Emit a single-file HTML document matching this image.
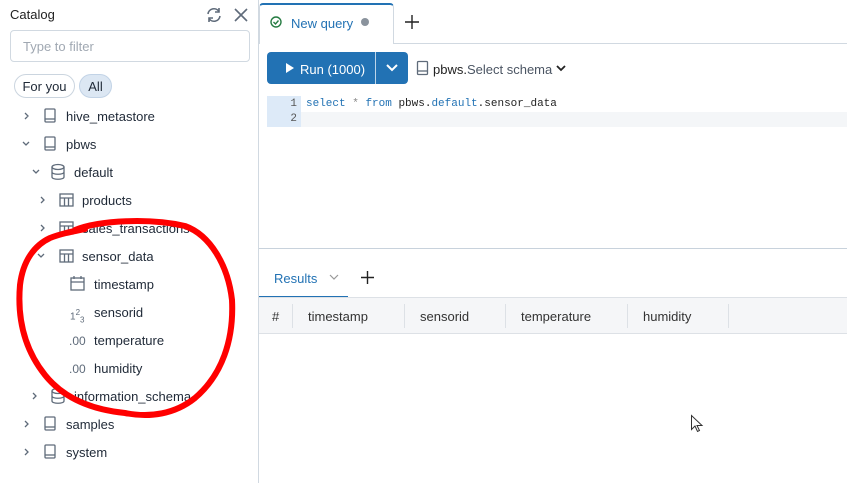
<!DOCTYPE html>
<html><head><style>
*{box-sizing:border-box;margin:0;padding:0}
body{width:847px;height:483px;overflow:hidden;background:#fff;font-family:"Liberation Sans",sans-serif;font-size:13px;color:#1f2937;position:relative}
.a{position:absolute}
.row{position:absolute;left:0;height:28px;line-height:30px;white-space:nowrap}
.th{position:absolute;top:298px;height:35px;line-height:38px;font-size:13px;color:#333}
.sep{position:absolute;top:304px;width:1px;height:24px;background:#dde1e6}
</style></head><body>
<!-- sidebar -->
<div class="a" style="left:258px;top:0;width:1px;height:483px;background:#d1d9e1"></div>
<div class="a" style="left:10px;top:7px;font-size:13px;color:#222">Catalog</div>
<svg class="a" style="left:205px;top:6px" width="18" height="18" viewBox="0 0 18 18" fill="none" stroke="#5f6b7a" stroke-width="1.6"><path d="M3 8a6 6 0 0 1 11-2.5M15 10a6 6 0 0 1-11 2.5M14 2v4h-4M4 16v-4h4"/></svg>
<svg class="a" style="left:233px;top:7px" width="16" height="16" viewBox="0 0 16 16" stroke="#5f6b7a" stroke-width="1.6"><path d="M2 2l12 12M14 2L2 14"/></svg>
<div class="a" style="left:10px;top:30px;width:240px;height:32px;border:1px solid #d1d9e1;border-radius:4px;padding-left:12px;line-height:31px;color:#a0a8b2">Type to filter</div>
<div class="a" style="left:14px;top:74px;width:61px;height:24px;border:1px solid #cbd5df;border-radius:12px;text-align:center;line-height:23px">For you</div>
<div class="a" style="left:79px;top:74px;width:33px;height:24px;border:1px solid #c2d3e6;background:#dce7f3;border-radius:12px;text-align:center;line-height:23px">All</div>

<svg class="a" style="left:0;top:0" width="258" height="483" fill="none" stroke="#5f6b7a" stroke-width="1.3">
<path d="M25 113l3 3-3 3M23 142l3 3 3-3M33 170l3 3 3-3M41 197l3 3-3 3M41 225l3 3-3 3M38 254l3 3 3-3M33 393l3 3-3 3M25 421l3 3-3 3M25 449l3 3-3 3"/>
<g><rect x="45" y="109" width="10" height="13" rx="1"/><path d="M45 119h10"/></g>
<g><rect x="45" y="137" width="10" height="13" rx="1"/><path d="M45 147h10"/></g>
<g><rect x="45" y="417" width="10" height="13" rx="1"/><path d="M45 427h10"/></g>
<g><rect x="45" y="445" width="10" height="13" rx="1"/><path d="M45 455h10"/></g>
<g><ellipse cx="58" cy="167" rx="6" ry="2.5"/><path d="M52 167v10c0 3 12 3 12 0v-10M52 172c0 3 12 3 12 0"/></g>
<g><ellipse cx="58" cy="391" rx="6" ry="2.5"/><path d="M52 391v10c0 3 12 3 12 0v-10M52 396c0 3 12 3 12 0"/></g>
<g><rect x="60" y="194" width="13" height="12"/><path d="M60 198h13M64.5 198v8M68.5 198v8"/></g>
<g><rect x="60" y="222" width="13" height="12"/><path d="M60 226h13M64.5 226v8M68.5 226v8"/></g>
<g><rect x="60" y="250" width="13" height="12"/><path d="M60 254h13M64.5 254v8M68.5 254v8"/></g>
<g><rect x="71" y="278" width="13" height="12"/><path d="M71 282h13M74 276v3M81 276v3"/></g>
</svg>
<div class="row" style="left:66px;top:102px">hive_metastore</div>
<div class="row" style="left:66px;top:130px">pbws</div>
<div class="row" style="left:74px;top:158px">default</div>
<div class="row" style="left:82px;top:186px">products</div>
<div class="row" style="left:82px;top:214px">sales_transactions</div>
<div class="row" style="left:82px;top:242px">sensor_data</div>
<div class="row" style="left:94px;top:270px">timestamp</div>
<div class="row" style="left:70px;top:298px;color:#5f6b7a;font-size:10px">1<sup style="font-size:8px">2</sup><sub style="font-size:8px">3</sub></div>
<div class="row" style="left:94px;top:298px">sensorid</div>
<div class="row" style="left:69px;top:326px;color:#5f6b7a;font-size:12px">.00</div>
<div class="row" style="left:94px;top:326px">temperature</div>
<div class="row" style="left:69px;top:354px;color:#5f6b7a;font-size:12px">.00</div>
<div class="row" style="left:94px;top:354px">humidity</div>
<div class="row" style="left:74px;top:382px">information_schema</div>
<div class="row" style="left:66px;top:410px">samples</div>
<div class="row" style="left:66px;top:438px">system</div>

<!-- editor -->
<div class="a" style="left:259px;top:43px;width:588px;height:1px;background:#d1d9e1"></div>
<div class="a" style="left:259px;top:3px;width:135px;height:41px;background:#fff;border:1px solid #d1d9e1;border-top:2px solid #2272b4;border-bottom:none;border-radius:4px 4px 0 0"></div>
<svg class="a" style="left:270px;top:16px" width="12" height="12" viewBox="0 0 12 12" fill="none" stroke="#277c43" stroke-width="1.4"><circle cx="6" cy="6" r="5"/><path d="M3.5 6l2 2 3-3.5"/></svg>
<div class="a" style="left:291px;top:16px;color:#2272b4">New query</div>
<div class="a" style="left:361px;top:18px;width:8px;height:8px;border-radius:50%;background:#8a939d"></div>
<svg class="a" style="left:405px;top:15px" width="14" height="14"><path d="M7 0v14M0 7h14" stroke="#222" stroke-width="1.4"/></svg>
<div class="a" style="left:267px;top:52px;width:141px;height:32px;background:#2272b4;border-radius:4px"></div>
<div class="a" style="left:375px;top:52px;width:1px;height:32px;background:#fff;opacity:.7"></div>
<div class="a" style="left:286px;top:63px;width:0;height:0;border-left:8px solid #fff;border-top:5px solid transparent;border-bottom:5px solid transparent"></div>
<div class="a" style="left:300px;top:62px;color:#fff">Run (1000)</div>
<svg class="a" style="left:385px;top:63px" width="14" height="10"><path d="M2 2l5 5 5-5" fill="none" stroke="#fff" stroke-width="2"/></svg>
<svg class="a" style="left:416px;top:60px" width="14" height="16" fill="none" stroke="#5f6b7a" stroke-width="1.3"><rect x="1.5" y="1.5" width="10" height="13" rx="1"/><path d="M1.5 11h10"/></svg>
<div class="a" style="left:433px;top:62px;font-size:13px"><span style="color:#222">pbws.</span><span style="color:#4b5563">Select schema</span></div>
<svg class="a" style="left:556px;top:65px" width="10" height="8"><path d="M1 1l4 4 4-4" fill="none" stroke="#222" stroke-width="1.8"/></svg>
<div class="a" style="left:267px;top:96px;width:34px;height:31px;background:#ddeaf8"></div>
<div class="a" style="left:301px;top:112px;width:546px;height:15px;background:#f4f6f8"></div>
<div class="a" style="left:267px;top:97px;width:30px;text-align:right;font-family:'Liberation Mono',monospace;font-size:11px;line-height:15px;color:#555">1<br>2</div>
<div class="a" style="left:306px;top:97px;font-family:'Liberation Mono',monospace;font-size:11px;line-height:15px;color:#222"><span style="color:#2272b4">select</span> <span style="color:#888">*</span> <span style="color:#2272b4">from</span> pbws.<span style="color:#2272b4">default</span>.sensor_data</div>

<!-- results -->
<div class="a" style="left:259px;top:248px;width:588px;height:1px;background:#c8d2dc"></div>
<div class="a" style="left:274px;top:271px;color:#2272b4">Results</div>
<svg class="a" style="left:329px;top:274px" width="10" height="7"><path d="M1 1l4 4 4-4" fill="none" stroke="#999" stroke-width="1.2"/></svg>
<svg class="a" style="left:361px;top:271px" width="13" height="13"><path d="M6.5 0v13M0 6.5h13" stroke="#222" stroke-width="1.4"/></svg>
<div class="a" style="left:259px;top:296px;width:89px;height:2px;background:#2272b4"></div>
<div class="a" style="left:259px;top:297px;width:588px;height:37px;background:#f5f6f8;border-top:1px solid #dde1e6;border-bottom:1px solid #dde1e6"></div>
<div class="sep" style="left:292px"></div><div class="sep" style="left:404px"></div><div class="sep" style="left:505px"></div><div class="sep" style="left:627px"></div><div class="sep" style="left:728px"></div>
<div class="th" style="left:272px">#</div>
<div class="th" style="left:308px">timestamp</div>
<div class="th" style="left:420px">sensorid</div>
<div class="th" style="left:521px">temperature</div>
<div class="th" style="left:643px">humidity</div>
<svg class="a" style="left:690px;top:414px" width="14" height="20"><path d="M1.5 1.5v14l3.5-3.5 2.5 5.5 2-1-2.5-5h5z" fill="#fff" stroke="#333" stroke-width="1"/></svg>

<!-- red circle -->
<svg class="a" style="left:0;top:0" width="260" height="483"><path d="M75 230C100 220 150 218 185 226C210 235 228 265 232 300C234 340 222 375 195 398C175 414 150 418 125 413C95 410 65 400 45 375C25 350 17 320 20 285C23 260 35 245 50 238C60 234 70 232 85 229" fill="none" stroke="#f00" stroke-width="6" stroke-linecap="round"/></svg>
</body></html>
